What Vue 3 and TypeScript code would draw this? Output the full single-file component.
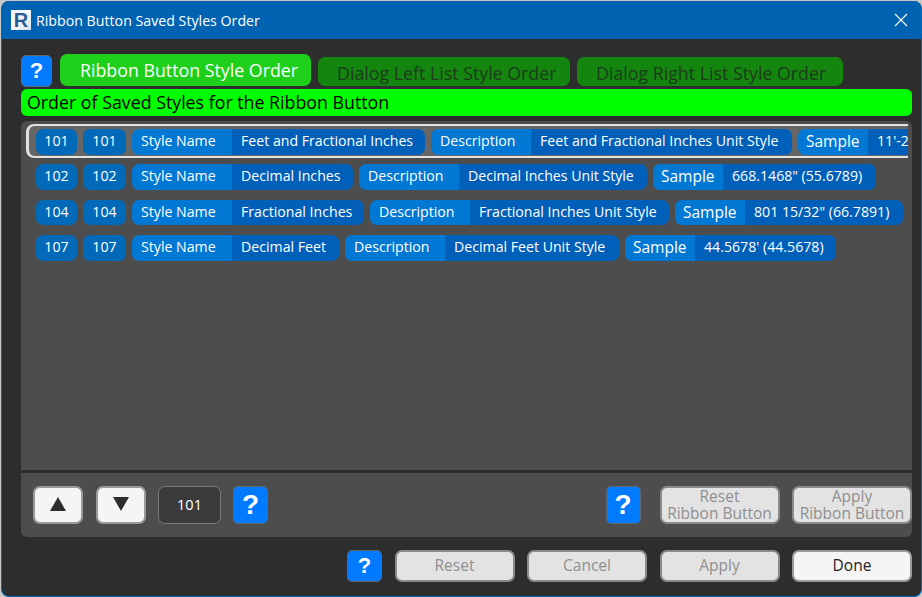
<template>
  <div class="window">
    <header class="titlebar">
      <span class="app-icon">R</span>
      <span class="title">Ribbon Button Saved Styles Order</span>
      <svg class="close" width="14" height="14" viewBox="0 0 14 14">
        <path d="M1 1 L13 13 M13 1 L1 13" stroke="#fff" stroke-width="1.1" fill="none" />
      </svg>
    </header>

    <main class="content">
      <div class="tabs">
        <button class="help help-tab">?</button>
        <button
          v-for="tab in tabs"
          :key="tab.label"
          class="tab"
          :class="{ active: tab.active }"
          :style="{ width: tab.width + 'px' }"
        >
          {{ tab.label }}
        </button>
      </div>

      <div class="heading">Order of Saved Styles for the Ribbon Button</div>

      <section class="list-panel">
        <div class="list">
          <div
            v-for="(row, i) in rows"
            :key="row.id"
            class="row"
            :class="{ selected: i === 0 }"
          >
            <span class="num">{{ row.id }}</span>
            <span class="num second">{{ row.id }}</span>
            <span v-for="cell in row.cells" :key="cell.label" class="pill">
              <span class="pill-label" :class="{ short: cell.label === 'Sample' }">{{ cell.label }}</span>
              <span class="pill-value" :style="{ width: cell.width + 'px' }">{{ cell.value }}</span>
            </span>
          </div>
        </div>
      </section>

      <section class="order-panel">
        <button class="btn arrow">
          <svg width="18" height="14" viewBox="0 0 18 14"><path d="M9 0 L17 14 L1 14 Z" fill="#2d2d2d" /></svg>
        </button>
        <button class="btn arrow">
          <svg width="18" height="14" viewBox="0 0 18 14"><path d="M1 0 L17 0 L9 14 Z" fill="#2d2d2d" /></svg>
        </button>
        <div class="order-value">101</div>
        <button class="help help-big">?</button>
        <div class="spacer"></div>
        <button class="help help-big">?</button>
        <button class="btn disabled two-line">Reset<br />Ribbon Button</button>
        <button class="btn disabled two-line">Apply<br />Ribbon Button</button>
      </section>

      <footer class="footer">
        <button class="help help-small">?</button>
        <button class="btn disabled">Reset</button>
        <button class="btn disabled">Cancel</button>
        <button class="btn disabled">Apply</button>
        <button class="btn done">Done</button>
      </footer>
    </main>
  </div>
</template>

<script setup lang="ts">
interface Cell {
  label: string;
  value: string;
  width: number;
}

interface Row {
  id: number;
  cells: Cell[];
}

const tabs = [
  { label: 'Ribbon Button Style Order', width: 251, active: true },
  { label: 'Dialog Left List Style Order', width: 252, active: false },
  { label: 'Dialog Right List Style Order', width: 266, active: false },
];

const rows: Row[] = [
  {
    id: 101,
    cells: [
      { label: 'Style Name', value: 'Feet and Fractional Inches', width: 193 },
      { label: 'Description', value: 'Feet and Fractional Inches Unit Style', width: 261 },
      { label: 'Sample', value: `11'-2 13/32" (11.2078)`, width: 170 },
    ],
  },
  {
    id: 102,
    cells: [
      { label: 'Style Name', value: 'Decimal Inches', width: 121 },
      { label: 'Description', value: 'Decimal Inches Unit Style', width: 188 },
      { label: 'Sample', value: `668.1468" (55.6789)`, width: 153 },
    ],
  },
  {
    id: 104,
    cells: [
      { label: 'Style Name', value: 'Fractional Inches', width: 132 },
      { label: 'Description', value: 'Fractional Inches Unit Style', width: 199 },
      { label: 'Sample', value: `801 15/32" (66.7891)`, width: 158 },
    ],
  },
  {
    id: 107,
    cells: [
      { label: 'Style Name', value: 'Decimal Feet', width: 107 },
      { label: 'Description', value: 'Decimal Feet Unit Style', width: 174 },
      { label: 'Sample', value: `44.5678' (44.5678)`, width: 141 },
    ],
  },
];
</script>

<style>
html,
body {
  margin: 0;
  background: #c9c9c9;
}
</style>

<style scoped>
.window {
  box-sizing: border-box;
  width: 921px;
  height: 596px;
  margin: 1px 0 0 1px;
  display: flex;
  flex-direction: column;
  background: #2d2d2d;
  border: 1px solid #0067c0;
  border-top: none;
  border-radius: 8px;
  overflow: hidden;
  font-family: "Open Sans", "Noto Sans", sans-serif;
  color: #fff;
}

.titlebar {
  flex: none;
  height: 38px;
  display: flex;
  align-items: center;
  padding: 0 13px 0 9px;
  background: #0063b1;
}

.app-icon {
  flex: none;
  width: 20px;
  height: 20px;
  margin-right: 5px;
  background: linear-gradient(135deg, #f4f6f9 55%, #d3dfec);
  color: #2a5c92;
  font: bold 20px/20px "Liberation Sans", sans-serif;
  text-align: center;
}

.title {
  flex: 1;
  font-size: 14.2px;
}

.content {
  flex: 1;
  display: flex;
  flex-direction: column;
  padding: 15px 9px 13px 19px;
}

button {
  font-family: inherit;
  padding: 0;
  cursor: pointer;
}

.tabs {
  display: flex;
  align-items: flex-end;
  height: 33px;
}

.tab {
  height: 29px;
  margin: 0 0 1px 7px;
  padding: 2px 0 0 19px;
  background: #14860f;
  color: #1c3c1a;
  border: none;
  border-radius: 7px;
  font-size: 17.8px;
  text-align: left;
}

.tab.active {
  height: 32px;
  padding: 2px 0 2px 20px;
  background: #1ed01a;
  color: #fff;
}

.help {
  box-sizing: border-box;
  background: #007bff;
  color: #fff;
  border: 1px solid #5f6770;
  border-radius: 5px;
  font-weight: 700;
  font-family: "Liberation Sans", sans-serif;
}

.help-tab {
  width: 31px;
  height: 32px;
  margin-right: 1px;
  font-size: 22px;
}

.help-big {
  flex: none;
  width: 35px;
  height: 38px;
  font-size: 28px;
}

.help-small {
  width: 35px;
  height: 32px;
  font-size: 22px;
}

.heading {
  height: 27px;
  margin-top: 2px;
  padding-left: 6px;
  background: #00ff00;
  color: #000;
  border-radius: 6px;
  font-size: 17.8px;
  line-height: 27px;
}

.list-panel {
  flex: none;
  height: 349px;
  margin-top: 5px;
  padding: 3px 4px 0 5px;
  box-sizing: border-box;
  background: #4d4d4d;
  border-radius: 6px 6px 0 0;
}

.list {
  overflow: hidden;
  height: 100%;
}

.row {
  box-sizing: border-box;
  height: 35.5px;
  display: flex;
  align-items: flex-start;
  gap: 6px;
  padding: 4px 0 0 10px;
  white-space: nowrap;
  font-size: 14.15px;
}

.row.selected {
  width: 1100px;
  height: 34px;
  margin-bottom: 2px;
  padding: 3px 0 0 7px;
  border: 2px solid #e2e2e2;
  border-left-width: 3px;
  border-radius: 8px;
  background: #666;
}

.num {
  flex: none;
  box-sizing: border-box;
  width: 41px;
  height: 25.5px;
  background: #0069b8;
  border-radius: 7px;
  text-align: center;
  line-height: 23.5px;
}

.num.second {
  width: 43px;
}

.pill {
  flex: none;
  display: flex;
  height: 25.5px;
  border-radius: 7px;
  overflow: hidden;
  line-height: 23.5px;
}

.pill-label {
  box-sizing: border-box;
  width: 100px;
  padding-left: 9px;
  background: #0078d4;
}

.pill-label.short {
  width: 70px;
  padding-left: 8px;
  font-size: 15.5px;
  line-height: 24.5px;
}

.pill-value {
  box-sizing: border-box;
  padding-left: 9px;
  background: #005fb8;
}

.order-panel {
  flex: none;
  box-sizing: border-box;
  height: 64px;
  margin-top: 3px;
  display: flex;
  align-items: center;
  padding: 0 0 0 12px;
  background: #4d4d4d;
  border-radius: 0 0 6px 6px;
}

.btn {
  box-sizing: border-box;
  height: 32px;
  width: 120px;
  margin-left: 12.5px;
  padding-bottom: 2px;
  border: 2px solid #9a9a9a;
  border-radius: 7px;
  background: #f5f5f5;
  color: #222;
  font-size: 15.5px;
}

.btn.arrow {
  width: 50px;
  height: 38px;
  margin: 0 12.5px 0 0;
  padding: 0;
}

.btn.disabled {
  background: #e3e3e3;
  color: #8f8f8f;
  border-color: #8b8b8b;
}

.two-line {
  height: 38px !important;
  line-height: 17px;
}

.order-value {
  box-sizing: border-box;
  width: 63px;
  height: 38px;
  margin-right: 12px;
  border: 1px solid #7a7a7a;
  border-radius: 7px;
  background: #3b3b3b;
  text-align: center;
  font-size: 14.5px;
  line-height: 36px;
}

.spacer {
  flex: 1;
}

.order-panel .help-big + .btn {
  margin-left: 19px;
}

.footer {
  flex: none;
  margin-top: 13px;
  display: flex;
  justify-content: flex-end;
  align-items: center;
}
</style>
